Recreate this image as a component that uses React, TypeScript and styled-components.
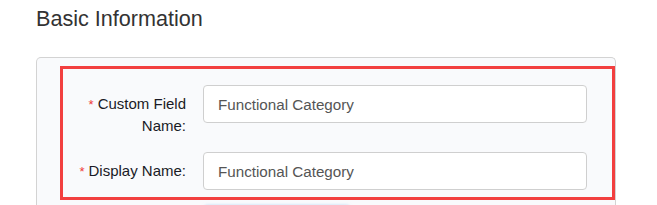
import React from "react";
import styled, { createGlobalStyle } from "styled-components";

const Global = createGlobalStyle`
  html, body { margin: 0; padding: 0; background: #ffffff; }
  body { font-family: "Liberation Sans", Arial, sans-serif; overflow: hidden; }
`;

const Page = styled.div`
  padding: 7px 41px 0 36px;
  width: 580px;
`;

const Title = styled.h3`
  margin: 0 0 26px 0;
  font-size: 21.6px;
  line-height: 24px;
  font-weight: 400;
  color: #333333;
`;

const Panel = styled.div`
  border: 1px solid #d3d3d3;
  border-bottom: none;
  border-radius: 5px 5px 0 0;
  background: #f9fafc;
  padding: 8px 0 0 23px;
  height: 148px;
  box-sizing: border-box;
  overflow: hidden;
`;

const Highlight = styled.div`
  border: 3px solid #f23f3f;
  padding: 16px 0 7px 0;
  display: flex;
  flex-direction: column;
  gap: 16px;
`;

const Row = styled.div`
  display: flex;
  align-items: flex-start;
`;

const Label = styled.label`
  width: 123px;
  padding: 8px 17px 0 0;
  text-align: right;
  font-size: 15px;
  line-height: 21px;
  color: #1a1a26;
  flex-shrink: 0;
`;

const Star = styled.span`
  color: #ef3b3b;
  font-size: 13px;
  margin-right: 4px;
`;

const Input = styled.input`
  width: 384px;
  height: 38px;
  box-sizing: border-box;
  border: 1px solid #cfcfcf;
  border-radius: 4px;
  background: #ffffff;
  padding: 0 14px;
  font-family: "Liberation Sans", Arial, sans-serif;
  font-size: 15.2px;
  color: #555555;
  outline: none;
`;

const NextButton = styled.div`
  margin: 5px 0 0 143px;
  width: 148px;
  height: 30px;
  border-radius: 5px;
  background: #e3f0fc;
  box-shadow: 0 0 3px rgba(150, 195, 240, 0.6);
`;

function Field({ label, value }: { label: string; value: string }) {
  return (
    <Row>
      <Label>
        <Star>*</Star>
        {label}
      </Label>
      <Input defaultValue={value} />
    </Row>
  );
}

export default function App() {
  return (
    <>
      <Global />
      <Page>
        <Title>Basic Information</Title>
        <Panel>
          <Highlight>
            <Field label="Custom Field Name:" value="Functional Category" />
            <Field label="Display Name:" value="Functional Category" />
          </Highlight>
          <NextButton />
        </Panel>
      </Page>
    </>
  );
}
